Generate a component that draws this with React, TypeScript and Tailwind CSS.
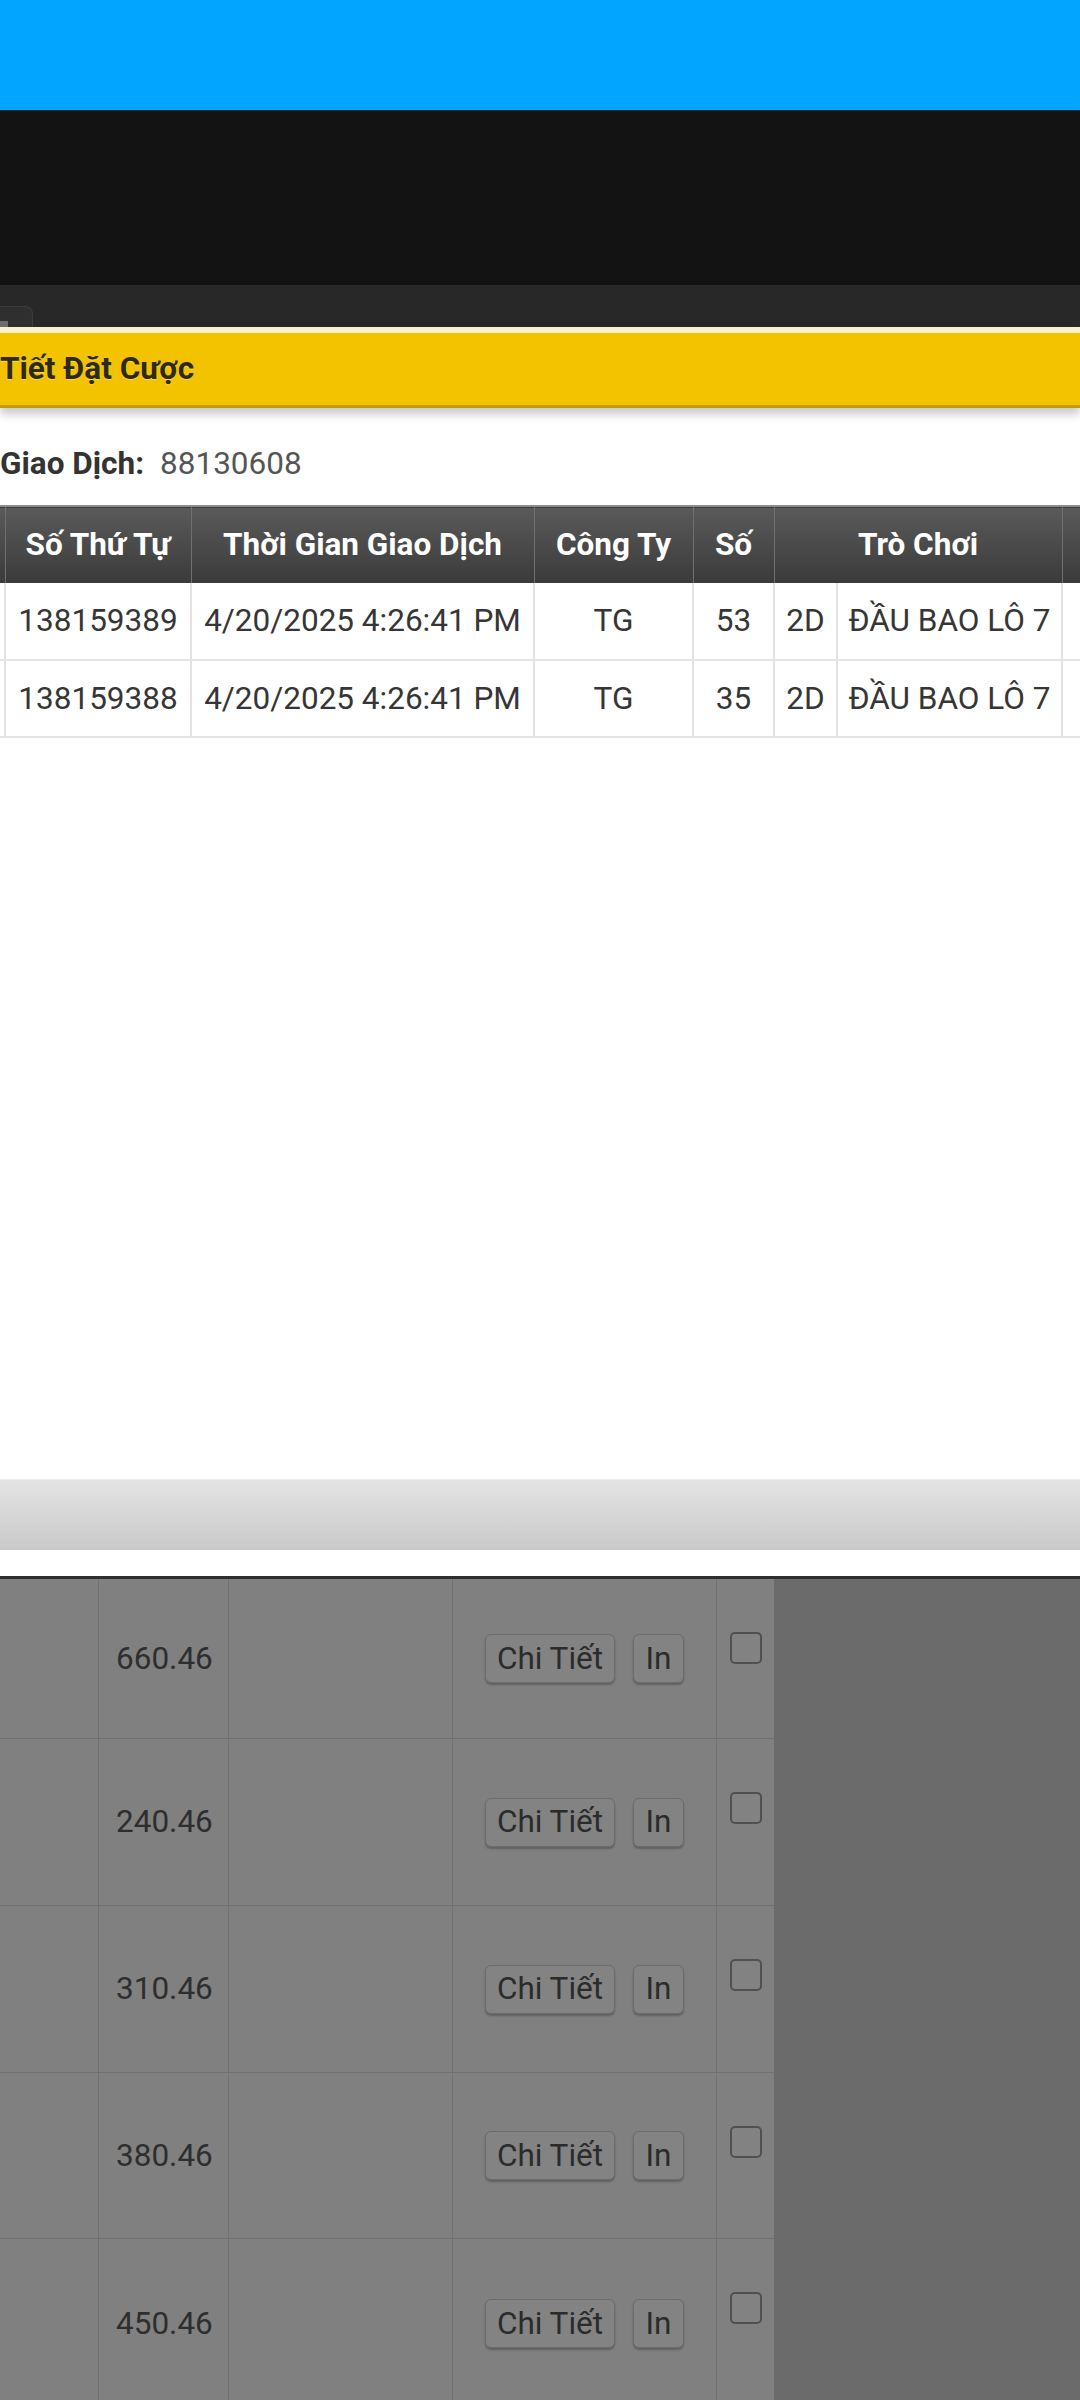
const HEAD = ['Số Thứ Tự', 'Thời Gian Giao Dịch', 'Công Ty', 'Số'];

const BETS = [
  { id: '138159389', time: '4/20/2025 4:26:41 PM', co: 'TG', num: '53', kind: '2D', game: 'ĐẦU BAO LÔ 7' },
  { id: '138159388', time: '4/20/2025 4:26:41 PM', co: 'TG', num: '35', kind: '2D', game: 'ĐẦU BAO LÔ 7' },
];

const PAGE_ROWS = [
  { amount: '660.46', h: 'h-[160px]' },
  { amount: '240.46', h: 'h-[167px]' },
  { amount: '310.46', h: 'h-[167px]' },
  { amount: '380.46', h: 'h-[166px]' },
  { amount: '450.46', h: 'h-[170px]' },
];

export default function App() {
  return (
    <div className="w-[1080px] h-[2400px] overflow-hidden bg-[#6b6b6b] font-['Roboto',sans-serif]">
      <div className="h-[110px] bg-[#02a5ff]" />
      <div className="h-[175px] bg-[#131313] border-t border-[#0b2a3a]" />
      <div className="h-[42px] bg-[#282828] flex items-end">
        <div className="w-[33px] h-[21px] bg-[#2f2f2f] border-t border-r border-[#3c3c3c] rounded-tr-[8px] flex items-end">
          <div className="w-[8px] h-[6px] bg-[#6e6e6e]" />
        </div>
      </div>

      <BetModal />
      <PageTable />
    </div>
  );
}

function BetModal() {
  return (
    <div className="bg-white">
      <div className="relative z-10 h-[81px] bg-[#f3c300] border-t-[6px] border-t-[#fbf1cf] border-b-[3px] border-b-[#c19c06] shadow-[0_6px_9px_rgba(0,0,0,0.22)] flex items-center">
        <span className="text-[31.5px] font-bold text-[#2f2a17] [text-shadow:0_1px_0_rgba(255,255,255,0.35)]">
          Tiết Đặt Cược
        </span>
      </div>

      <div className="h-[1071px] pt-[38px]">
        <div className="flex items-center h-[36px] text-[31.5px] leading-none">
          <span className="font-bold text-[#333]">Giao Dịch:</span>
          <span className="ml-[16px] text-[#555]">88130608</span>
        </div>

        <div className="mt-[23px] w-[1080px] overflow-hidden">
          <table className="table-fixed border-collapse w-[1140px] text-[31.5px]">
            <colgroup>
              <col className="w-[5px]" />
              <col className="w-[186px]" />
              <col className="w-[343px]" />
              <col className="w-[159px]" />
              <col className="w-[81px]" />
              <col className="w-[63px]" />
              <col className="w-[225px]" />
              <col className="w-[78px]" />
            </colgroup>
            <thead>
              <tr className="h-[77px] bg-gradient-to-b from-[#5a5a5a] to-[#3b3b3b] text-white font-bold border-t-2 border-[#8c8c8c]">
                <th className="border-r border-[#707070]" />
                {HEAD.map((h) => (
                  <th key={h} className="border-r border-[#707070] font-bold whitespace-nowrap">
                    {h}
                  </th>
                ))}
                <th colSpan={2} className="border-r border-[#707070] font-bold">
                  Trò Chơi
                </th>
                <th />
              </tr>
            </thead>
            <tbody className="text-[#363636]">
              {BETS.map((b) => (
                <tr key={b.id} className="h-[77px] border-b-2 border-[#e3e3e3]">
                  <td className="border-r-2 border-[#e3e3e3]" />
                  <td className="border-r-2 border-[#e3e3e3] text-center">{b.id}</td>
                  <td className="border-r-2 border-[#e3e3e3] text-center whitespace-nowrap">{b.time}</td>
                  <td className="border-r-2 border-[#e3e3e3] text-center">{b.co}</td>
                  <td className="border-r-2 border-[#e3e3e3] text-center">{b.num}</td>
                  <td className="border-r-2 border-[#e3e3e3] text-center">{b.kind}</td>
                  <td className="border-r-2 border-[#e3e3e3] text-center whitespace-nowrap">{b.game}</td>
                  <td />
                </tr>
              ))}
            </tbody>
          </table>
        </div>
      </div>

      <div className="h-[71px] bg-gradient-to-b from-[#e4e4e4] to-[#c9c9c9] border-t border-[#ececec]" />
      <div className="h-[26px] bg-white" />
    </div>
  );
}

function PageTable() {
  return (
    <div className="border-t-[3px] border-[#2e2e2e] flex">
      <div className="w-[774px] bg-[#808080]">
        {PAGE_ROWS.map((r) => (
          <div
            key={r.amount}
            className={`${r.h} grid grid-cols-[99px_130px_224px_264px_57px] border-b border-[#717171]`}
          >
            <div className="border-r border-[#717171]" />
            <div className="border-r border-[#717171] flex items-center pl-[17px] text-[31.5px] text-[#2e2e2e]">
              {r.amount}
            </div>
            <div className="border-r border-[#717171]" />
            <div className="border-r border-[#717171] flex items-center justify-center gap-[18px]">
              <button className="h-[49px] w-[130px] rounded-[6px] border border-[#6c6c6c] bg-[#838383] shadow-[0_2px_2px_rgba(0,0,0,0.25)] text-[31.5px] text-[#2b2b2b] leading-none">
                Chi Tiết
              </button>
              <button className="h-[49px] w-[51px] rounded-[6px] border border-[#6c6c6c] bg-[#838383] shadow-[0_2px_2px_rgba(0,0,0,0.25)] text-[31.5px] text-[#2b2b2b] leading-none">
                In
              </button>
            </div>
            <div className="flex justify-center pt-[53px]">
              <div className="w-[32px] h-[32px] rounded-[5px] border-2 border-[#505050] bg-[#828282]" />
            </div>
          </div>
        ))}
      </div>
      <div className="flex-1 bg-[#6b6b6b]" />
    </div>
  );
}
